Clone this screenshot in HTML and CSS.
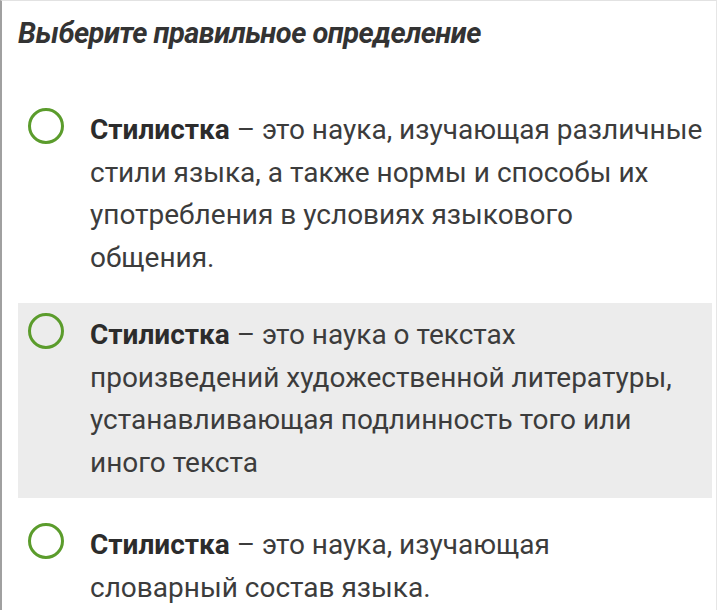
FILE: index.html
```html
<!DOCTYPE html>
<html lang="ru">
<head>
<meta charset="utf-8">
<link rel="stylesheet" href="styles.css">
</head>
<body>
<div class="frame">
  <h1 class="title">Выберите правильное определение</h1>
  <div class="options">
    <div class="option">
      <span class="radio"></span>
      <p class="text"><b>Стилистка</b> – это наука, изучающая различные стили языка, а также нормы и способы их употребления в условиях языкового общения.</p>
    </div>
    <div class="option option-hover">
      <span class="radio"></span>
      <p class="text"><b>Стилистка</b> – это наука о текстах произведений художественной литературы, устанавливающая подлинность того или иного текста</p>
    </div>
    <div class="option option-after-hover">
      <span class="radio"></span>
      <p class="text"><b>Стилистка</b> – это наука, изучающая словарный состав языка.</p>
    </div>
  </div>
</div>
</body>
</html>
```
FILE: styles.css
```css
html, body {
  margin: 0;
  padding: 0;
  background: #ffffff;
}
.frame {
  box-sizing: border-box;
  width: 717px;
  height: 610px;
  border-left: 2px solid #a0a0a0;
  border-top: 1px solid #e2e2e2;
  border-right: 1px solid #e6e6e6;
  padding: 0 4px 0 16px;
  font-family: Roboto, "Noto Sans", sans-serif;
  color: #3c3c3c;
  overflow: hidden;
}
.title {
  margin: 0;
  padding-top: 14px;
  font-size: 29px;
  line-height: 36px;
  font-weight: 700;
  font-style: italic;
  letter-spacing: -0.5px;
  color: #333333;
}
.options {
  display: flex;
  flex-direction: column;
  gap: 10px;
  margin-top: 47px;
}
.option {
  display: flex;
  align-items: flex-start;
  gap: 26px;
  padding: 11px 0 14px 10px;
}
.option-hover {
  background: #ececec;
}
.option-after-hover {
  padding-top: 16px;
}
.radio {
  flex: none;
  box-sizing: border-box;
  width: 36px;
  height: 36px;
  margin-top: -1px;
  border: 3.5px solid #5b9c2c;
  border-radius: 50%;
}
.text {
  margin: 0;
  width: 613px;
  flex: none;
  font-size: 28px;
  line-height: 42.5px;
}
.text b {
  font-weight: 700;
  color: #2c2c2c;
}
```
